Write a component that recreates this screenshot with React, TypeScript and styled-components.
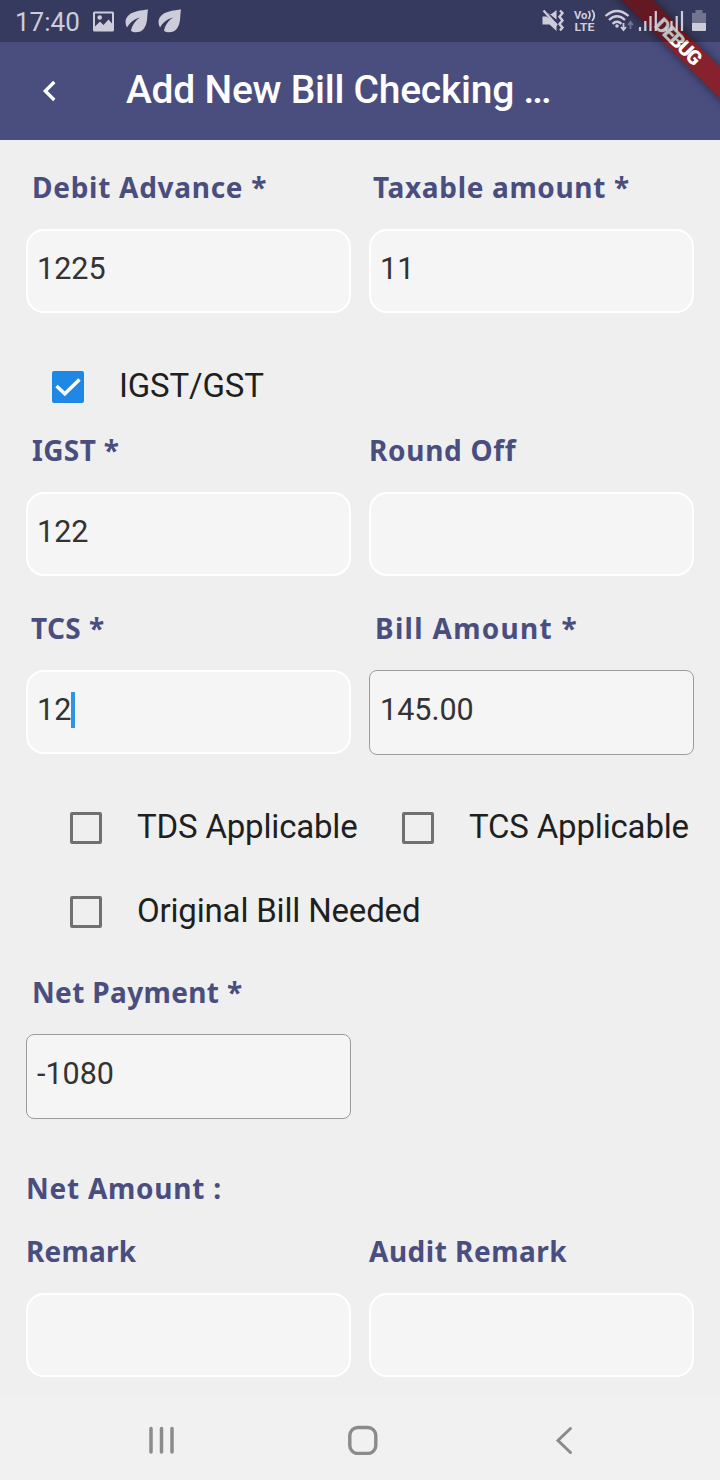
import React from 'react';
import styled, { createGlobalStyle } from 'styled-components';

const Global = createGlobalStyle`
  * { box-sizing: border-box; }
  body { margin: 0; background: #efefef; font-family: Roboto, "Liberation Sans", sans-serif; }
`;

const Screen = styled.div`
  width: 720px;
  height: 1480px;
  display: flex;
  flex-direction: column;
  background: #efefef;
  overflow: hidden;
`;

const Header = styled.header`
  position: relative;
  height: 140px;
  padding-top: 42px;
  flex: none;
  display: flex;
  align-items: center;
  background: #4a4e7f;
  overflow: hidden;
`;

const BackButton = styled.button`
  width: 98px;
  height: 98px;
  padding: 0;
  border: 0;
  background: none;
  display: flex;
  align-items: center;
  justify-content: center;
`;

const Title = styled.h1`
  margin: 0 0 2px 28px;
  font-size: 39px;
  line-height: 46px;
  font-weight: 500;
  letter-spacing: -0.25px;
  color: #fff;
  white-space: nowrap;
`;

const Dots = styled.span`
  letter-spacing: -2.1px;
`;

const Ribbon = styled.div`
  position: absolute;
  left: 588px;
  top: 30px;
  width: 180px;
  height: 22px;
  transform: rotate(45deg);
  background: #86212d;
  box-shadow: 0 0 11px rgba(0, 0, 0, 0.5);
  color: #fff;
  font-size: 20px;
  font-weight: 900;
  line-height: 22px;
  letter-spacing: -1.6px;
  text-align: center;
`;

const StatusBar = styled.div`
  position: absolute;
  inset: 0 0 auto 0;
  height: 42px;
  padding: 0 13px 0 15px;
  display: flex;
  align-items: center;
  justify-content: space-between;
  background: rgba(0, 0, 0, 0.25);
  color: #cdccd9;
`;

const Clock = styled.span`
  width: 78px;
  font-size: 26px;
  line-height: 42px;
  padding-top: 2px;
`;

const Group = styled.div`
  display: flex;
  align-items: center;
`;

const Form = styled.main`
  flex: 1;
  padding: 27px 26px 0;
`;

const Row = styled.div<{ $gap: number }>`
  display: grid;
  grid-template-columns: 325px 325px;
  column-gap: 18px;
  margin-bottom: ${(p) => p.$gap}px;
`;

const Label = styled.label<{ $indent?: number; $track?: number; $gap?: number }>`
  display: block;
  height: 40px;
  margin-bottom: ${(p) => p.$gap ?? 22}px;
  padding-left: ${(p) => p.$indent ?? 0}px;
  font-family: "Noto Sans", "Open Sans", sans-serif;
  font-size: 28px;
  font-weight: 700;
  line-height: 40px;
  letter-spacing: ${(p) => p.$track ?? 0}px;
  color: #4a4e7f;
  white-space: nowrap;
`;

const Box = styled.div<{ $outlined?: boolean }>`
  height: ${(p) => (p.$outlined ? 85 : 84)}px;
  margin-bottom: ${(p) => (p.$outlined ? -1 : 0)}px;
  padding: 0 0 ${(p) => (p.$outlined ? 5 : 4)}px ${(p) => (p.$outlined ? 10 : 9)}px;
  display: flex;
  align-items: center;
  border: ${(p) => (p.$outlined ? '1px solid #9c9c9c' : '2px solid #fff')};
  border-radius: ${(p) => (p.$outlined ? 8 : 18)}px;
  background: #f5f5f5;
  color: #333;
  font-size: 30.5px;
  line-height: 36px;
`;

const Caret = styled.span`
  width: 4px;
  height: 36px;
  background: #2f93e6;
`;

const Checks = styled.div<{ $indent: number; $gap: number }>`
  display: flex;
  padding-left: ${(p) => p.$indent}px;
  margin-bottom: ${(p) => p.$gap}px;
`;

const CheckItem = styled.div<{ $width?: number }>`
  width: ${(p) => (p.$width ? `${p.$width}px` : 'auto')};
  height: 48px;
  display: flex;
  align-items: center;
  gap: 35px;
  color: #1f1f1f;
  font-size: 33px;
  line-height: 48px;
  letter-spacing: -0.18px;
  white-space: nowrap;
`;

const Tick = styled.span<{ $on?: boolean }>`
  flex: none;
  width: 32px;
  height: 32px;
  margin-top: 2px;
  display: flex;
  border-radius: 2px;
  border: ${(p) => (p.$on ? '0' : '3.5px solid #707070')};
  background: ${(p) => (p.$on ? '#1f88e5' : 'transparent')};
`;

const NavBar = styled.nav`
  flex: none;
  height: 84px;
  padding: 4px 145px 0 147px;
  display: flex;
  align-items: center;
  background: #f1f1f1;
`;

const NavButton = styled.span<{ $before?: number }>`
  display: flex;
  margin-left: ${(p) => p.$before ?? 0}px;
`;

type FieldProps = {
  label: string;
  value?: string;
  indent?: number;
  track?: number;
  outlined?: boolean;
  focused?: boolean;
};

function Field({ label, value, indent, track, outlined, focused }: FieldProps) {
  return (
    <div>
      <Label $indent={indent} $track={track}>{label}</Label>
      <Box $outlined={outlined}>
        {value}
        {focused && <Caret />}
      </Box>
    </div>
  );
}

function Check({ label, checked, width }: { label: string; checked?: boolean; width?: number }) {
  return (
    <CheckItem $width={width}>
      <Tick $on={checked}>
        {checked && (
          <svg width="32" height="32" viewBox="0 0 32 32">
            <path d="M4.500 15l8.300 7.800L27.500 8.500" fill="none" stroke="#fff" strokeWidth="3.400" />
          </svg>
        )}
      </Tick>
      <span>{label}</span>
    </CheckItem>
  );
}

const Picture = () => (
  <svg width="32" height="24" viewBox="0 0 32 24" fill="currentColor">
    <path
      fillRule="evenodd"
      d="M1.500 2.500h18a1.500 1.500 0 0 1 1.500 1.500v17a1.500 1.500 0 0 1-1.500 1.500h-18A1.500 1.500 0 0 1 0 21V4a1.500 1.500 0 0 1 1.500-1.500zM2 4.500v13l5-5 3.500 3.500 5-5.500 3.500 4v-10z"
    />
    <circle cx="6.700" cy="8.500" r="2.300" />
  </svg>
);

const Leaf = () => (
  <svg width="33" height="26" viewBox="0 0 33 26" fill="currentColor">
    <path d="M23 1.500C16 2.500 9 3 4.500 6.500 0 10-.5 15 2 19.500 5 14.500 9 11 15 9.500 10.500 12.500 7 17 6 23c4 2.500 10 1.500 13-2.500C23 15 21.800 8 23 1.500z" />
  </svg>
);

const CellBars = ({ x }: { x: number }) => (
  <path
    d={`M${x} 27v4M${x + 5.3} 21v10M${x + 10.5} 16v15M${x + 15.8} 11v20`}
    stroke="currentColor"
    strokeWidth="2.200"
  />
);

function StatusIcons() {
  return (
    <svg width="168" height="42" viewBox="539 0 168 42" fill="currentColor">
      <path d="M542.500 16.500h4L556.500 23v8l-7-6.500h-7zM546 14.500l3-1 7.500 6V10l-5 4z" />
      <path d="M543.500 10.500l13.500 15" stroke="currentColor" strokeWidth="2.200" />
      <path d="M560 10.500l2.500 2.500-3 3.700 3 3.700-3 3.700 3 3.500-2.500 3" fill="none" stroke="currentColor" strokeWidth="2.400" />
      <text x="574" y="18.500" fontSize="10.600" fontWeight="700" textLength="13.500" lengthAdjust="spacingAndGlyphs">Vo</text>
      <path d="M588.500 11q3 4 0 8M592 10q4.500 5.500 0 11" fill="none" stroke="currentColor" strokeWidth="1.700" />
      <text x="574.500" y="31" fontSize="10.600" fontWeight="700" textLength="20" lengthAdjust="spacingAndGlyphs">LTE</text>
      <g fill="none" stroke="currentColor" strokeWidth="2.300">
        <path d="M605.500 16q11.500-10 23 0M609 20q8-7.500 16 0M612.500 23.800q4.500-4 9 0" />
      </g>
      <circle cx="617" cy="26" r="1.800" />
      <path d="M623.500 23v7M621 27l2.500 3 2.500-3" fill="none" stroke="currentColor" strokeWidth="1.800" />
      <path d="M630.500 29v-7M628 25l2.500-3 2.500 3" fill="none" stroke="currentColor" strokeWidth="1.800" opacity=".4" />
      <CellBars x={640} />
      <CellBars x={666.2} />
      <path d="M692 13h3.500v-3h7v3h3.500v10h-14z" opacity=".4" />
      <path d="M692 23h14v7a1 1 0 0 1-1 1h-12a1 1 0 0 1-1-1z" />
    </svg>
  );
}

export default function App() {
  return (
    <Screen>
      <Global />
      <Header>
        <BackButton aria-label="Back">
          <svg width="16" height="24" viewBox="0 0 16 24">
            <path d="M13.300 3L4.300 12l9 9" fill="none" stroke="#fff" strokeWidth="3.300" />
          </svg>
        </BackButton>
        <Title>
          Add New Bill Checking <Dots>...</Dots>
        </Title>
        <Ribbon>DEBUG</Ribbon>
        <StatusBar>
          <Group>
            <Clock>17:40</Clock>
            <Picture />
            <Leaf />
            <Leaf />
          </Group>
          <StatusIcons />
        </StatusBar>
      </Header>
      <Form>
        <Row $gap={49}>
          <Field label="Debit Advance *" value="1225" indent={6} track={0.72} />
          <Field label="Taxable amount *" value="11" indent={4} track={0.66} />
        </Row>
        <Checks $indent={26} $gap={20}>
          <Check label="IGST/GST" checked />
        </Checks>
        <Row $gap={32}>
          <Field label="IGST *" value="122" indent={6} track={0.35} />
          <Field label="Round Off" track={0.7} />
        </Row>
        <Row $gap={49}>
          <Field label="TCS *" value="12" indent={5} track={0.4} focused />
          <Field label="Bill Amount *" value="145.00" indent={6} track={1.3} outlined />
        </Row>
        <Checks $indent={44} $gap={36}>
          <Check label="TDS Applicable" width={332} />
          <Check label="TCS Applicable" />
        </Checks>
        <Checks $indent={44} $gap={37}>
          <Check label="Original Bill Needed" />
        </Checks>
        <Row $gap={50}>
          <Field label="Net Payment *" value="-1080" indent={6} track={0.35} outlined />
        </Row>
        <Label $gap={23} $track={0.75}>Net Amount :</Label>
        <Row $gap={0}>
          <Field label="Remark" track={0.2} />
          <Field label="Audit Remark" track={0.5} />
        </Row>
      </Form>
      <NavBar>
        <NavButton>
          <svg width="28" height="30" viewBox="0 0 28 30">
            <path d="M4 3.500v23.500M14.500 3.500v23.500M25 3.500v23.500" stroke="#8b8b8b" strokeWidth="3.500" strokeLinecap="round" />
          </svg>
        </NavButton>
        <NavButton $before={173}>
          <svg width="30" height="30" viewBox="0 0 30 30">
            <rect x="1.800" y="2.500" width="26" height="26" rx="8" fill="none" stroke="#8b8b8b" strokeWidth="3.400" />
          </svg>
        </NavButton>
        <NavButton $before={177}>
          <svg width="20" height="30" viewBox="0 0 20 30">
            <path d="M15.500 3.500L3 15.500l12.500 12" fill="none" stroke="#8b8b8b" strokeWidth="3" strokeLinecap="round" />
          </svg>
        </NavButton>
      </NavBar>
    </Screen>
  );
}
